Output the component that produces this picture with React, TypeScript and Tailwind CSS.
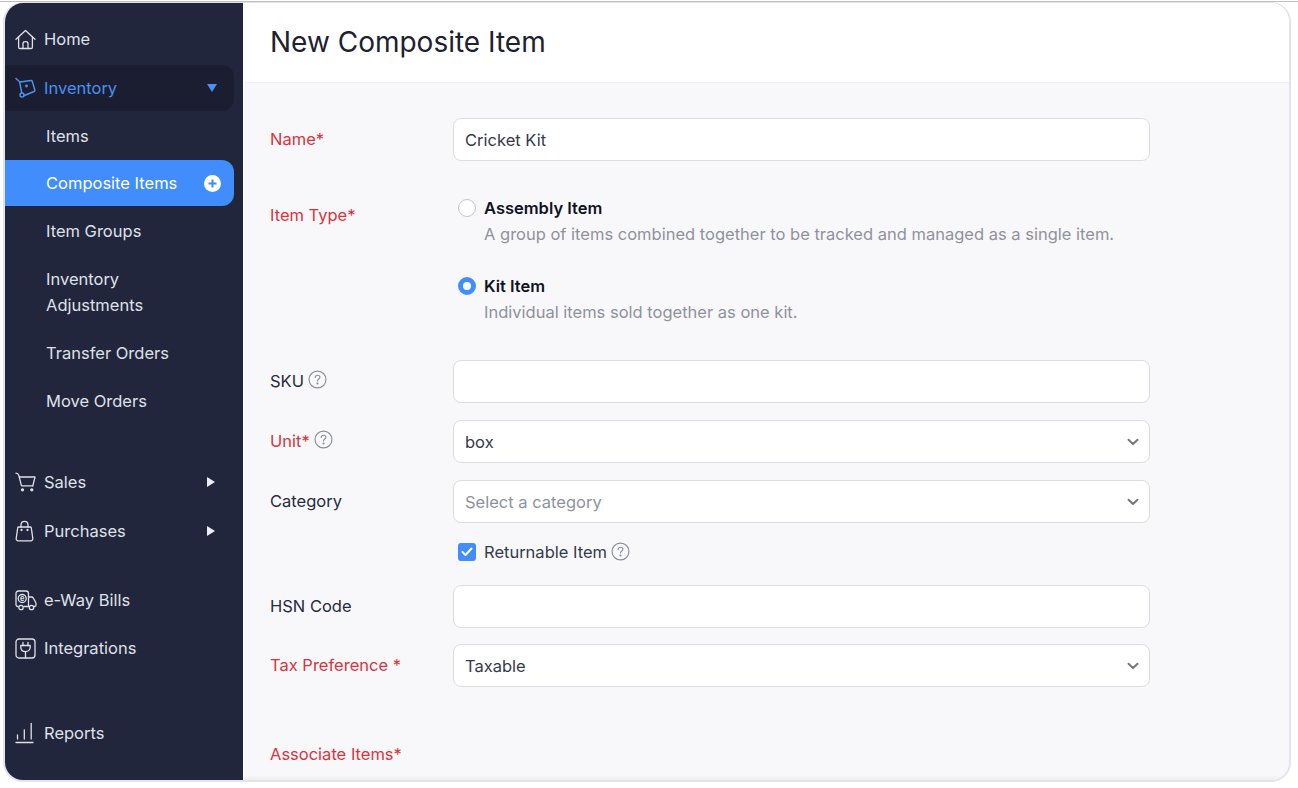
import { ReactNode } from "react"

function HomeIcon() {
  return (
    <svg width="21" height="21" viewBox="0 0 21 21" fill="none" stroke="currentColor" strokeWidth="1.3" strokeLinejoin="round" strokeLinecap="round">
      <path d="M1 10.2 10.5 1.4 20 10.2" />
      <path d="M3.6 8.2V18.2c0 .8.5 1.3 1.3 1.3h11.2c.8 0 1.3-.5 1.3-1.3V8.2" />
      <path d="M8 19.5v-5c0-1 .9-1.8 2.5-1.8s2.500.8 2.500 1.800v5" />
    </svg>
  )
}

function InventoryIcon() {
  return (
    <svg width="21" height="22" viewBox="0 0 21 22" fill="none" stroke="currentColor" strokeWidth="1.5" strokeLinejoin="round" strokeLinecap="round">
      <path d="M1 1.500 4.600 4.800 6.800 16" />
      <path d="M4.800 5 16 3.600c.7-.1 1.100.2 1.300.8L19.800 13c.2.700-.1 1.200-.7 1.500L8.800 18.800" />
      <circle cx="7" cy="18" r="2" />
      <circle cx="11.500" cy="9" r=".7" />
    </svg>
  )
}

function CartIcon() {
  return (
    <svg width="21" height="20" viewBox="0 0 21 20" fill="none" stroke="currentColor" strokeWidth="1.300" strokeLinejoin="round" strokeLinecap="round">
      <path d="M1 1.200c1.500 0 2.400.7 2.800 2.200L6.500 13.800h11.300" />
      <path d="M4.400 5H20l-2.200 8.800" />
      <circle cx="7.500" cy="17.800" r="1" fill="currentColor" />
      <circle cx="16.800" cy="17.800" r="1" fill="currentColor" />
    </svg>
  )
}

function BagIcon() {
  return (
    <svg width="19" height="22" viewBox="0 0 19 22" fill="none" stroke="currentColor" strokeWidth="1.300" strokeLinejoin="round" strokeLinecap="round">
      <path d="M3.800 7h11.400c.6 0 1 .3 1.100.9l1.500 10.400c.2 1.500-.7 2.500-2 2.500H3.200c-1.300 0-2.200-1-2-2.500L2.700 7.900c.1-.6.500-.9 1.100-.9Z" />
      <path d="M6 7V5c0-2.300 1.400-3.700 3.500-3.700S13 2.700 13 5v2" />
      <circle cx="6.500" cy="10" r=".5" fill="currentColor" />
      <circle cx="12.500" cy="10" r=".5" fill="currentColor" />
    </svg>
  )
}

function TruckIcon() {
  return (
    <svg width="22" height="21" viewBox="0 0 22 21" fill="none" stroke="currentColor" strokeWidth="1.300" strokeLinejoin="round" strokeLinecap="round">
      <path d="M3 16.500C1.800 16.500 1 15.700 1 14.500V3.500C1 2 2 1 3.500 1H11c1.500 0 2.500 1 2.500 2.500v13H9" />
      <path d="M13.500 7h3.200c.6 0 1 .2 1.300.7l2.500 4.300c.3.500.5 1 .5 1.500v1.500c0 .9-.6 1.500-1.500 1.500h-.5" />
      <circle cx="6" cy="17.500" r="2.200" />
      <circle cx="16.500" cy="17.500" r="2.200" />
      <circle cx="7.200" cy="8.500" r="4" />
      <text x="7.200" y="11" textAnchor="middle" fontSize="7.500" fontWeight="700" fill="currentColor" stroke="none">e</text>
    </svg>
  )
}

function PlugIcon() {
  return (
    <svg width="21" height="21" viewBox="0 0 21 21" fill="none" stroke="currentColor" strokeWidth="1.300" strokeLinejoin="round" strokeLinecap="round">
      <rect x="1" y="1" width="19" height="19" rx="3" />
      <path d="M5.800 7.500h9.400V9c0 2.800-2 4.700-4.700 4.700S5.800 11.800 5.800 9V7.500Z" />
      <path d="M8 7.500V4.500M13 7.500V4.500M10.500 13.700V20" />
    </svg>
  )
}

function BarsIcon() {
  return (
    <svg width="19" height="22" viewBox="0 0 19 22" fill="none" stroke="currentColor" strokeWidth="1.300" strokeLinecap="round">
      <path d="M2.500 17V13M9.300 17V8M16.200 17V1.500" />
      <path d="M1 20.500h17" />
    </svg>
  )
}

function HelpIcon() {
  return (
    <svg className="-translate-y-[1px]" width="19" height="19" viewBox="0 0 18 18" fill="none" stroke="#8d8f99" strokeWidth="1.100" strokeLinecap="round">
      <circle cx="9" cy="9" r="8" />
      <path d="M6.800 7c.1-1.300 1-2 2.300-2 1.300 0 2.200.8 2.200 1.900 0 1.700-2.300 1.700-2.300 3.500" />
      <circle cx="9" cy="12.800" r=".5" fill="#8d8f99" />
    </svg>
  )
}

function ChevronIcon() {
  return (
    <svg width="12" height="8" viewBox="0 0 12 8" fill="none" stroke="#74767f" strokeWidth="2" strokeLinecap="round" strokeLinejoin="round">
      <path d="M1.500 1.800 6 6l4.500-4.200" />
    </svg>
  )
}

function NavRow({ icon, label, arrow }: { icon: ReactNode; label: string; arrow?: boolean }) {
  return (
    <div className="flex h-[46px] items-center pl-[10px] pr-[28px] text-[#dfe1e8]">
      <span className="flex w-[29px] shrink-0 items-center">{icon}</span>
      <span className="flex-1">{label}</span>
      {arrow && <span className="h-0 w-0 border-y-[5px] border-l-[8px] border-y-transparent border-l-[#eceef2]" />}
    </div>
  )
}

function SubRow({ label }: { label: string }) {
  return <div className="flex h-[46px] items-center pl-[41px] text-[#dfe1e8]">{label}</div>
}

function Field({ label, required, help, children }: { label: string; required?: boolean; help?: boolean; children: ReactNode }) {
  return (
    <div className="flex h-[43px] items-center">
      <div className={`flex w-[183px] shrink-0 -translate-y-[1px] items-center gap-[4px] ${required ? "text-[#d9343c]" : "text-[#262b3d]"}`}>
        <span>{label}</span>
        {help && <HelpIcon />}
      </div>
      {children}
    </div>
  )
}

function Input({ value, placeholder, select }: { value?: string; placeholder?: string; select?: boolean }) {
  return (
    <div className="flex h-[43px] w-[697px] items-center justify-between rounded-[8px] border border-[#dcdde3] bg-white pl-[11px] pr-[10px]">
      <span className={placeholder ? "text-[#8f929c]" : "text-[#343a4c]"}>{value ?? placeholder}</span>
      {select && <ChevronIcon />}
    </div>
  )
}

export default function App() {
  return (
    <div className="h-[788px] w-[1298px] overflow-hidden bg-white pb-[6px] pl-[3px] pr-[7px] pt-[1px] font-['Inter',sans-serif] text-[16.5px] leading-[26px]">
      <div className="h-[1px] -ml-[3px] -mr-[7px] bg-[#bdbdc2]" />
      <div className="flex h-[780px] overflow-hidden rounded-[20px] border-2 border-t border-[#e3e4ea]">
        <aside className="flex w-[238px] shrink-0 flex-col bg-[#22263c] pt-[13px]">
          <NavRow icon={<HomeIcon />} label="Home" />
          <div className="mr-[9px] mt-[3px] flex h-[46px] items-center rounded-r-[12px] bg-[#1b1e30] pl-[10px] pr-[17px] text-[#4a90f0]">
            <span className="flex w-[29px] shrink-0 items-center"><InventoryIcon /></span>
            <span className="flex-1">Inventory</span>
            <span className="h-0 w-0 border-x-[5.500px] border-t-[8px] border-x-transparent border-t-[#4a90f0]" />
          </div>
          <div className="mt-[2px]"><SubRow label="Items" /></div>
          <div className="mr-[9px] mt-[1px] flex h-[46px] items-center justify-between rounded-r-[12px] bg-[#408dfb] pl-[41px] pr-[13px] text-white">
            <span>Composite Items</span>
            <svg width="17" height="17" viewBox="0 0 17 17">
              <circle cx="8.500" cy="8.500" r="8.500" fill="white" />
              <path d="M8.500 4.500v8M4.500 8.500h8" stroke="#408dfb" strokeWidth="2" />
            </svg>
          </div>
          <div className="mt-[2px]"><SubRow label="Item Groups" /></div>
          <div className="mt-[2px] flex h-[72px] items-center pl-[41px] text-[#dfe1e8]">Inventory<br />Adjustments</div>
          <div className="mt-[2px]"><SubRow label="Transfer Orders" /></div>
          <div className="mt-[2px]"><SubRow label="Move Orders" /></div>
          <div className="mt-[35px]"><NavRow icon={<CartIcon />} label="Sales" arrow /></div>
          <div className="mt-[3px]"><NavRow icon={<BagIcon />} label="Purchases" arrow /></div>
          <div className="mt-[23px]"><NavRow icon={<TruckIcon />} label="e-Way Bills" /></div>
          <div className="mt-[2px]"><NavRow icon={<PlugIcon />} label="Integrations" /></div>
          <div className="mt-[39px]"><NavRow icon={<BarsIcon />} label="Reports" /></div>
        </aside>
        <main className="flex min-w-0 flex-1 flex-col border-l border-[#ffffff] bg-[#f8f8fb]">
          <header className="flex h-[80px] shrink-0 items-center border-b border-[#f0f1f4] bg-white pb-[2px] pl-[26px]">
            <h1 className="text-[28px] font-normal leading-[36px] text-[#1d2130]">New Composite Item</h1>
          </header>
          <div className="flex flex-1 flex-col pl-[26px] pt-[35px]">
            <Field label="Name*" required><Input value="Cricket Kit" /></Field>
            <div className="mt-[33px] flex h-[132px]">
              <div className="w-[183px] shrink-0 pt-[8px] text-[#d9343c]">Item Type*</div>
              <div className="flex flex-col pl-[5px] pt-[1px]">
                <div className="flex h-[26px] items-center">
                  <span className="h-[18px] w-[18px] rounded-full border border-[#c3c5cd] bg-white" />
                  <span className="ml-[8px] font-semibold text-[#10131f]">Assembly Item</span>
                </div>
                <div className="ml-[26px] text-[#8f929c]">A group of items combined together to be tracked and managed as a single item.</div>
                <div className="mt-[26px] flex h-[26px] items-center">
                  <span className="h-[18px] w-[18px] rounded-full border-[5px] border-[#408dfb] bg-white" />
                  <span className="ml-[8px] font-semibold text-[#10131f]">Kit Item</span>
                </div>
                <div className="ml-[26px] text-[#8f929c]">Individual items sold together as one kit.</div>
              </div>
            </div>
            <div className="mt-[34px]"><Field label="SKU" help><Input /></Field></div>
            <div className="mt-[17px]"><Field label="Unit*" required help><Input value="box" select /></Field></div>
            <div className="mt-[17px]"><Field label="Category"><Input placeholder="Select a category" select /></Field></div>
            <div className="ml-[188px] mt-[16px] flex h-[26px] items-center text-[#343a4c]">
              <span className="flex h-[18px] w-[18px] items-center justify-center rounded-[3px] bg-[#408dfb]">
                <svg width="12" height="10" viewBox="0 0 12 10" fill="none" stroke="white" strokeWidth="2" strokeLinecap="round" strokeLinejoin="round">
                  <path d="M1.500 5 4.500 8l6-6.500" />
                </svg>
              </span>
              <span className="ml-[8px]">Returnable Item</span>
              <span className="ml-[4px] flex"><HelpIcon /></span>
            </div>
            <div className="mt-[20px]"><Field label="HSN Code"><Input /></Field></div>
            <div className="mt-[16px]"><Field label="Tax Preference *" required><Input value="Taxable" select /></Field></div>
            <div className="mt-[54px] text-[#d9343c]">Associate Items*</div>
          </div>
          <div className="h-[5px] shrink-0 bg-gradient-to-b from-[#f8f8fb] to-[#eeeef2]" />
        </main>
      </div>
    </div>
  )
}
